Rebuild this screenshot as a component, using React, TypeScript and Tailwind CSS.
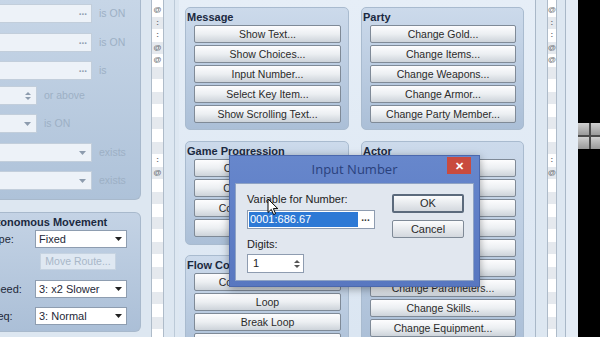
import React from "react";

const btn =
  "h-[18px] w-full flex items-center justify-center rounded-[2px] border border-[#7f8a97] bg-linear-to-b from-[#fdfdfe] via-[#eceff2] to-[#cdd3da] text-[10.5px] text-[#2a2a2a] leading-none whitespace-nowrap overflow-hidden";

const Group = ({
  title,
  items,
  className = "",
}: {
  title: string;
  items: string[];
  className?: string;
}) => (
  <div
    className={`rounded-[5px] border border-[#a9bbcf] bg-linear-to-b from-[#ccdaeb] to-[#abbfd7] pl-[8px] pr-[7px] ${className}`}
  >
    <div className="h-[17px] -ml-[7px] pt-[4px] text-[11px] font-bold leading-none text-[#1b2940]">
      {title}
    </div>
    <div className="flex flex-col gap-[2px]">
      {items.map((t) => (
        <div key={t} className={btn}>
          {t}
        </div>
      ))}
    </div>
  </div>
);

const DropArrow = ({ color = "#222" }: { color?: string }) => (
  <svg width="7" height="4" viewBox="0 0 7 4">
    <path d="M0 0 L7 0 L3.5 4 Z" fill={color} />
  </svg>
);

const SpinArrows = ({ color = "#8d9cae" }: { color?: string }) => (
  <svg width="6" height="10" viewBox="0 0 6 10">
    <path d="M0 4 L6 4 L3 1 Z" fill={color} />
    <path d="M0 6 L6 6 L3 9 Z" fill={color} />
  </svg>
);

// condition rows on the left (cut off by the window edge)
const condRows = [
  { mt: "mt-[4px]", kind: "dots", wide: true, label: "is ON" },
  { mt: "mt-[10px]", kind: "dots", wide: true, label: "is ON" },
  { mt: "mt-[9px]", kind: "dots", wide: true, label: "is" },
  { mt: "mt-[6px]", kind: "spin", wide: false, label: "or above" },
  { mt: "mt-[9px]", kind: "drop", wide: false, label: "is ON" },
  { mt: "mt-[10px]", kind: "drop", wide: true, label: "exists" },
  { mt: "mt-[9px]", kind: "drop", wide: true, label: "exists" },
];

const listIcons: Record<number, string> = { 0: "@", 1: ":", 2: ":", 3: "@", 4: "@", 12: ":", 13: "@" };

const Strip = ({ rows }: { rows: number }) => (
  <div className="w-[13px] h-full border-x border-[#aebbc9] bg-white flex flex-col pt-[4px]">
    {Array.from({ length: rows }).map((_, i) => (
      <div
        key={i}
        className={`h-[12.5px] shrink-0 flex items-center justify-center text-[8px] font-bold leading-none text-[#6b6f75] ${
          i % 2 === 0 ? "bg-white" : "bg-[#e5e9ee]"
        }`}
      >
        {listIcons[i] ?? ""}
      </div>
    ))}
  </div>
);

const MoveRow = ({ label, value, mt }: { label: string; value: string; mt: string }) => (
  <div className={`flex items-center -ml-[13px] ${mt}`}>
    <span className="w-[48px] text-[11px] leading-none text-[#1e2838]">{label}</span>
    <div className="w-[92px] h-[18px] bg-white border border-[#8e9db0] flex items-center justify-between pl-[3px] pr-[4px] text-[11px] text-[#1e2838]">
      <span>{value}</span>
      <DropArrow />
    </div>
  </div>
);

export default function App() {
  return (
    <div className="relative w-[600px] h-[337px] overflow-hidden flex bg-[#dde7f1] font-['Liberation_Sans',Arial,sans-serif]">
      {/* left: conditions + autonomous movement */}
      <div className="w-[143px] h-full flex flex-col shrink-0">
        <div className="w-[141px] h-[200px] rounded-br-[6px] bg-linear-to-b from-[#c7d6e7] to-[#aec2d9] border-r border-b border-[#a8b9cc] flex flex-col overflow-hidden">
          {condRows.map((r, i) => (
            <div key={i} className={`flex items-center h-[19px] shrink-0 ${r.mt}`}>
              <div
                className={`-ml-[40px] h-[19px] border border-[#c2cedb] bg-[#edf2f8] flex items-center justify-end ${
                  r.wide ? "w-[132px]" : "w-[77px]"
                } ${r.kind === "dots" ? "pr-[4px]" : "pr-[5px]"}`}
              >
                {r.kind === "dots" && (
                  <span className="text-[10px] font-bold leading-none text-[#8d9cae] -mt-[4px]">...</span>
                )}
                {r.kind === "drop" && <DropArrow color="#8d9cae" />}
                {r.kind === "spin" && <SpinArrows />}
              </div>
              <span className="ml-[7px] text-[10.5px] leading-none text-[#9db0c5]">{r.label}</span>
            </div>
          ))}
        </div>

        <div className="mt-[12px] w-[141px] h-[120px] rounded-r-[6px] bg-linear-to-b from-[#c4d3e5] to-[#abbfd7] border border-l-0 border-[#a8b9cc] overflow-hidden">
          <div className="h-[17px] -ml-[18px] pt-[4px] text-[11px] font-bold leading-none text-[#1b2940] whitespace-nowrap">
            Autonomous Movement
          </div>
          <MoveRow label="Type:" value="Fixed" mt="mt-0" />
          <div className="ml-[40px] mt-[5px] w-[76px] h-[17px] border border-[#c6d3e1] bg-[#dfe8f2] flex items-center justify-center text-[10.5px] text-[#a8b7c8]">
            Move Route...
          </div>
          <MoveRow label="Speed:" value="3: x2 Slower" mt="mt-[10px]" />
          <MoveRow label="Freq:" value="3: Normal" mt="mt-[9px]" />
        </div>
      </div>

      {/* event list strip */}
      <div className="w-[34px] h-full shrink-0 flex">
        <div className="w-[8px]" />
        <Strip rows={27} />
        <div className="w-[10px]" />
        <div className="w-[1px] h-full bg-[#bccad8]" />
      </div>

      {/* command panel */}
      <div className="w-[357px] h-full shrink-0 ml-[2px] bg-linear-to-b from-[#e6eef7] to-[#dbe6f2] border-r border-[#a9b8c8] flex flex-col">
        <div className="h-[2px] ml-[40px] w-[80px] bg-[#a3afbd]" />
        <div className="grid grid-cols-[164px_163px] gap-x-[12px] pl-[6px] pt-[7px]">
          <div className="flex flex-col">
            <Group
              title="Message"
              items={["Show Text...", "Show Choices...", "Input Number...", "Select Key Item...", "Show Scrolling Text..."]}
              className="pb-[6px]"
            />
            <Group
              title="Game Progression"
              items={["Control Switches...", "Control Variables...", "Control Self Switch...", "Control Timer..."]}
              className="mt-[11px] pb-[7px]"
            />
            <Group
              title="Flow Control"
              items={["Conditional Branch...", "Loop", "Break Loop", "Exit Event Processing"]}
              className="mt-[10px] pb-[6px]"
            />
          </div>
          <div className="flex flex-col">
            <Group
              title="Party"
              items={["Change Gold...", "Change Items...", "Change Weapons...", "Change Armor...", "Change Party Member..."]}
              className="pb-[6px]"
            />
            <Group
              title="Actor"
              items={[
                "Change HP...",
                "Change MP...",
                "Change State...",
                "Recover All",
                "Change EXP...",
                "Change Level...",
                "Change Parameters...",
                "Change Skills...",
                "Change Equipment...",
              ]}
              className="mt-[11px] pb-[6px]"
            />
          </div>
        </div>
      </div>

      {/* right scroll strip + map view */}
      <div className="w-[11px] h-full shrink-0" />
      <Strip rows={27} />
      <div className="w-[8px] h-full shrink-0" />
      <div className="w-[1px] h-full shrink-0 bg-[#a9b8c8]" />
      <div className="w-[12px] h-full shrink-0 bg-[#e4ecf5]" />
      <div className="flex-1 h-full bg-black">
        <div className="mt-[123px] grid grid-cols-2 gap-[2px] bg-[#4a4a4a] w-[24px]">
          {[0, 1, 2, 3].map((i) => (
            <div key={i} className="h-[12px] bg-linear-to-b from-[#d0d0d0] to-[#9a9a9a]" />
          ))}
        </div>
      </div>

      {/* Input Number dialog */}
      <div className="absolute left-[229px] top-[155px] w-[251px] h-[132px] bg-linear-to-b from-[#6787cc] to-[#5877c0] border border-[#4b68ad] flex flex-col shadow-[0_2px_8px_rgba(0,0,0,0.35)]">
        <div className="relative h-[27px] shrink-0 flex items-center justify-center font-['Open_Sans',sans-serif] text-[13px] text-[#2a417c]">
          Input Number
          <div className="absolute right-[8px] top-[1px] w-[24px] h-[17px] bg-[#c94b3f] flex items-center justify-center text-white text-[11px] font-bold leading-none">
            ✕
          </div>
        </div>
        <div className="mx-[5px] mb-[5px] flex-1 bg-[#e1e7ef] border border-[#8fa3c4] flex">
          <div className="pl-[11px] pt-[10px] flex flex-col">
            <span className="text-[11px] leading-none text-[#222]">Variable for Number:</span>
            <div className="mt-[5px] w-[128px] h-[19px] bg-white border border-[#8e9cb0] flex items-center p-[1px]">
              <div className="flex-1 h-full bg-[#2d79d5] text-white text-[11px] flex items-center pl-[1px]">
                0001:686.67
              </div>
              <div className="w-[15px] h-full flex items-center justify-center text-[10px] font-bold leading-none text-[#333] -mt-[3px]">
                ...
              </div>
            </div>
            <span className="mt-[10px] text-[11px] leading-none text-[#222]">Digits:</span>
            <div className="mt-[4px] w-[57px] h-[19px] bg-white border border-[#8e9cb0] flex items-center justify-between pl-[5px] pr-[3px] text-[11px] text-[#222]">
              <span>1</span>
              <SpinArrows color="#555" />
            </div>
          </div>
          <div className="ml-auto mr-[9px] pt-[10px] flex flex-col gap-[7px]">
            <div className="w-[72px] h-[19px] rounded-[2px] border-2 border-[#5b6a7c] bg-linear-to-b from-[#fbfcfd] to-[#d3d8de] flex items-center justify-center text-[11px] text-[#2a2a2a]">
              OK
            </div>
            <div className="w-[72px] h-[18px] rounded-[2px] border border-[#7f8a97] bg-linear-to-b from-[#fbfcfd] to-[#d3d8de] flex items-center justify-center text-[11px] text-[#2a2a2a]">
              Cancel
            </div>
          </div>
        </div>
      </div>

      {/* mouse cursor */}
      <svg className="absolute left-[267px] top-[198px]" width="12" height="18" viewBox="0 0 12 18">
        <path d="M1 1 L1 14.5 L4.3 11.4 L6.6 16.6 L8.6 15.7 L6.4 10.6 L10.8 10.6 Z" fill="white" stroke="black" strokeWidth="1" />
      </svg>
    </div>
  );
}
